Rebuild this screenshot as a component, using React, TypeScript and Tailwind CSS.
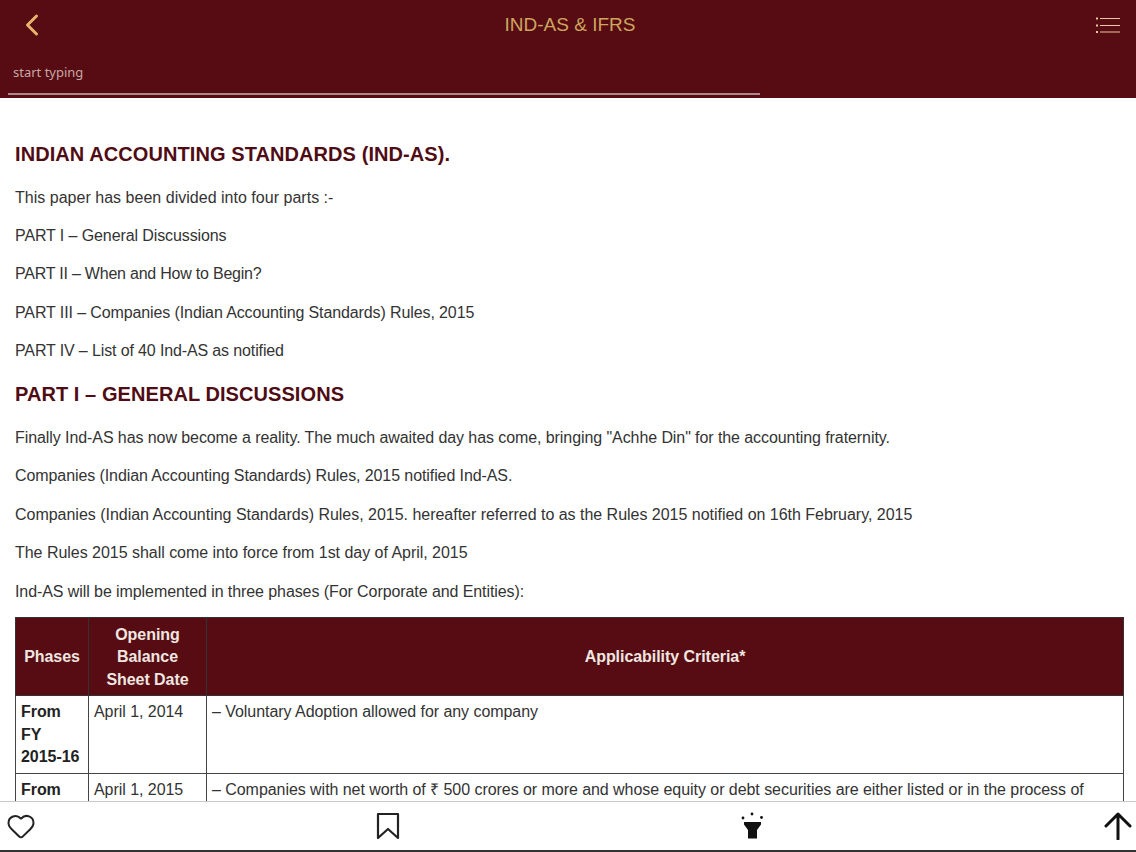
import React from 'react';
import { ChevronLeft, Heart } from 'lucide-react';

const intro = [
  { text: 'This paper has been divided into four parts :-', tracking: 'tracking-[0.02px]' },
  { text: 'PART I – General Discussions', tracking: 'tracking-[-0.1px]' },
  { text: 'PART II – When and How to Begin?', tracking: 'tracking-[-0.22px]' },
  { text: 'PART III – Companies (Indian Accounting Standards) Rules, 2015', tracking: 'tracking-[-0.11px]' },
  { text: 'PART IV – List of 40 Ind-AS as notified', tracking: 'tracking-[-0.13px]' },
];

const discussion = [
  { text: 'Finally Ind-AS has now become a reality. The much awaited day has come, bringing "Achhe Din" for the accounting fraternity.', tracking: 'tracking-[-0.08px]' },
  { text: 'Companies (Indian Accounting Standards) Rules, 2015 notified Ind-AS.', tracking: 'tracking-[-0.09px]' },
  { text: 'Companies (Indian Accounting Standards) Rules, 2015. hereafter referred to as the Rules 2015 notified on 16th February, 2015', tracking: 'tracking-[-0.02px]' },
  { text: 'The Rules 2015 shall come into force from 1st day of April, 2015', tracking: 'tracking-[-0.03px]' },
  { text: 'Ind-AS will be implemented in three phases (For Corporate and Entities):', tracking: 'tracking-[-0.08px]' },
];

const MenuIcon = () => (
  <svg width="24" height="16" viewBox="0 0 24 16" fill="none" stroke="#e8c9a0" strokeWidth="1">
    <path d="M4 1.500h20M4 8.500h20M4 15h20" />
    <path d="M0 1.500h2M0 8.500h2M0 15h2" strokeWidth="2" />
  </svg>
);

const BookmarkIcon = () => (
  <svg width="24" height="28" viewBox="0 0 24 28" fill="none" stroke="#222" strokeWidth="2.2" strokeLinejoin="round">
    <path d="M2 2h20v24l-10-9-10 9z" />
  </svg>
);

const TorchIcon = () => (
  <svg width="24" height="28" viewBox="0 0 24 28" fill="#111">
    <circle cx="12" cy="2" r="1.4" />
    <circle cx="3" cy="6" r="1.4" />
    <circle cx="21.500" cy="5.500" r="1.4" />
    <path d="M4 10h17v2.500L17 18v8.500H8V18l-4-5.500z" />
  </svg>
);

const UpIcon = () => (
  <svg width="28" height="28" viewBox="0 0 28 28" fill="none" stroke="#111" strokeWidth="3" strokeLinecap="round" strokeLinejoin="round">
    <path d="M14 27V2M2 14L14 2l12 12" />
  </svg>
);

const App: React.FC = () => {
  return (
    <div className="w-[1136px] h-[852px] flex flex-col overflow-hidden bg-white font-['Liberation_Sans',Arial,sans-serif] text-[#333]">
      <header className="h-[98px] shrink-0 bg-[#570c13] flex flex-col">
        <div className="h-[50px] flex items-center justify-between pl-[14px] pr-[16px]">
          <ChevronLeft size={36} strokeWidth={2} className="text-[#e8b46e]" />
          <h1 className="mr-[6px] text-[19px] text-[#cda55f]">IND-AS &amp; IFRS</h1>
          <MenuIcon />
        </div>
        <div className="ml-2 w-[752px] h-[45px] flex items-center border-b-2 border-[#a98a8a] pl-[5px] pt-[3px]">
          <span className="text-[13px] text-[#c7a7a5] font-['Noto_Sans',sans-serif]">start typing</span>
        </div>
      </header>

      <main className="flex-1 min-h-0 overflow-hidden px-[15px] pt-[44px]">
        <h2 className="text-[20px] leading-[24px] tracking-[0.08px] font-bold text-[#4f0c14]">INDIAN ACCOUNTING STANDARDS (IND-AS).</h2>
        <div className="mt-[20.5px] flex flex-col gap-[16px] text-[16px] leading-[22.4px]">
          {intro.map((line) => (
            <p key={line.text} className={line.tracking}>{line.text}</p>
          ))}
        </div>
        <h2 className="mt-[19.5px] text-[20px] leading-[24px] tracking-[0.07px] font-bold text-[#4f0c14]">PART I – GENERAL DISCUSSIONS</h2>
        <div className="mt-[21px] flex flex-col gap-[16px] text-[16px] leading-[22.4px]">
          {discussion.map((line) => (
            <p key={line.text} className={line.tracking}>{line.text}</p>
          ))}
        </div>
        <table className="mt-[14px] w-[1109px] table-fixed border-collapse text-[16px] leading-[22.4px] tracking-[-0.05px]">
          <colgroup>
            <col className="w-[73px]" />
            <col className="w-[118px]" />
            <col />
          </colgroup>
          <thead>
            <tr className="bg-[#570c13] text-[#efe6e0] font-bold text-center">
              <th className="border border-[#333] px-[5px] pt-[6px] pb-[4px]">Phases</th>
              <th className="border border-[#333] px-[5px] pt-[6px] pb-[4px]">Opening Balance Sheet Date</th>
              <th className="border border-[#333] px-[5px] pt-[6px] pb-[4px]">Applicability Criteria*</th>
            </tr>
          </thead>
          <tbody>
            <tr className="align-top">
              <td className="border border-[#444] px-[5px] pt-[5px] pb-[4px] font-bold text-[#222]">From FY 2015-16</td>
              <td className="border border-[#444] px-[5px] pt-[5px] pb-[4px]">April 1, 2014</td>
              <td className="border border-[#444] px-[5px] pt-[5px] pb-[4px]">– Voluntary Adoption allowed for any company</td>
            </tr>
            <tr className="align-top">
              <td className="border border-[#444] px-[5px] py-[5px] font-bold text-[#222]">From FY 2016-17</td>
              <td className="border border-[#444] px-[5px] py-[5px]">April 1, 2015</td>
              <td className="border border-[#444] px-[5px] py-[5px]">
                – Companies with net worth of ₹ 500 crores or more and whose equity or debt securities are either listed or in the process of listing
              </td>
            </tr>
          </tbody>
        </table>
      </main>

      <footer className="h-[51px] shrink-0 bg-white border-t border-[#c8c8c8] border-b-2 border-b-[#333] flex items-center justify-between pl-[6px] pr-[4px] text-[#222]">
        <Heart size={30} strokeWidth={1.6} />
        <BookmarkIcon />
        <TorchIcon />
        <UpIcon />
      </footer>
    </div>
  );
};

export default App;
